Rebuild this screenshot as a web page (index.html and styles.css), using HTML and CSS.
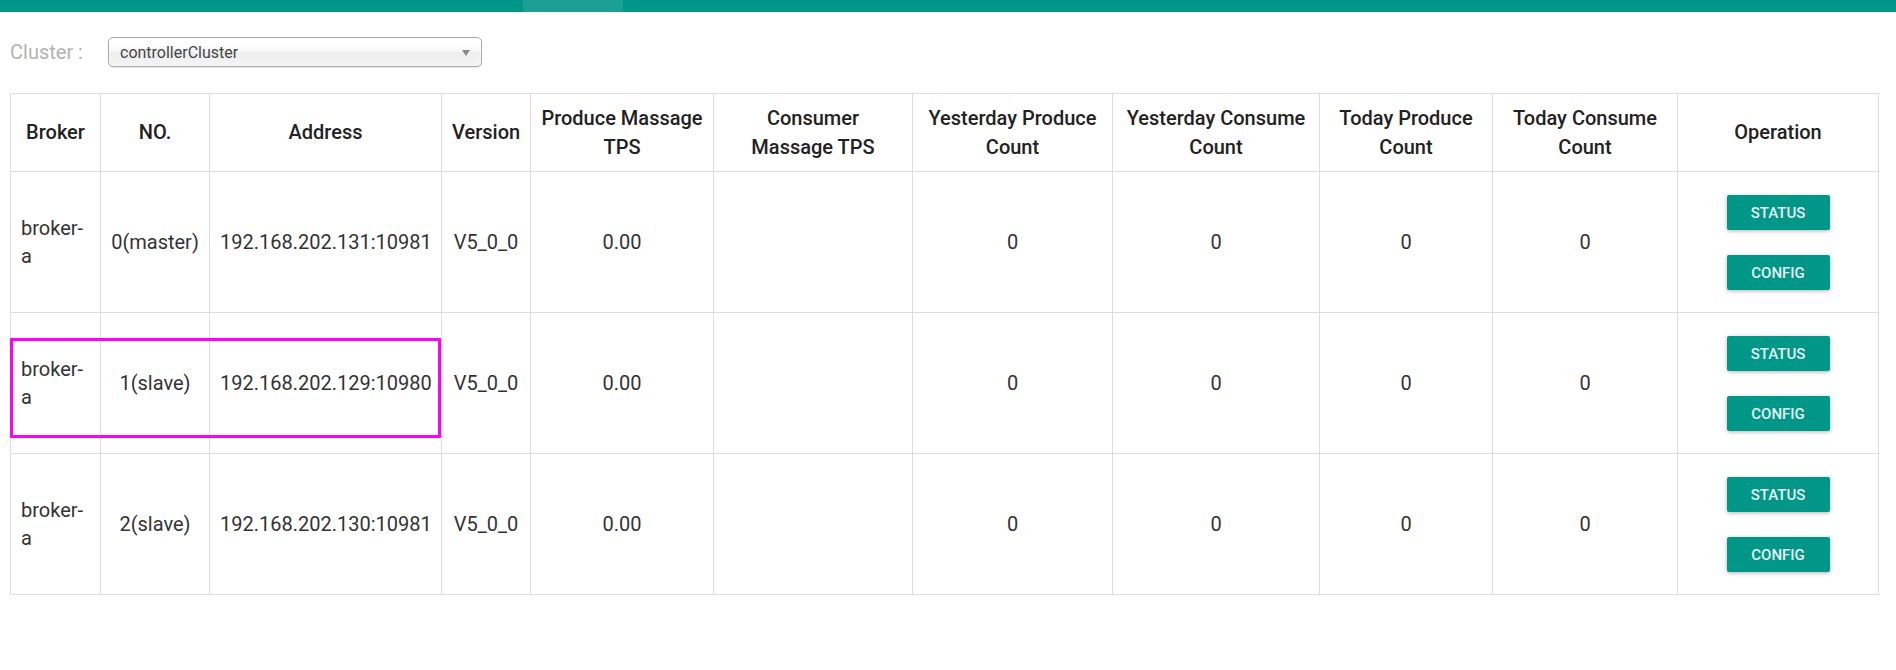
FILE: index.html
```html
<!DOCTYPE html>
<html lang="en">
<head>
  <meta charset="UTF-8">
  <title>RocketMQ Console – Cluster</title>
  <link rel="stylesheet" href="styles.css">
</head>
<body>
  <div class="topbar"><span class="topbar-active"></span></div>

  <div class="page">
    <div class="cluster-row">
      <label class="cluster-label">Cluster :</label>
      <div class="cluster-select">
        <span>controllerCluster</span>
        <span class="select-arrow"></span>
      </div>
    </div>

    <div class="table-wrap">
      <table class="broker-table">
        <colgroup>
          <col style="width:90px"><col style="width:109px"><col style="width:232px"><col style="width:89px">
          <col style="width:183px"><col style="width:199px"><col style="width:200px"><col style="width:207px">
          <col style="width:173px"><col style="width:185px"><col style="width:201px">
        </colgroup>
        <thead>
          <tr>
            <th>Broker</th>
            <th>NO.</th>
            <th>Address</th>
            <th>Version</th>
            <th>Produce Massage TPS</th>
            <th>Consumer Massage TPS</th>
            <th>Yesterday Produce Count</th>
            <th>Yesterday Consume Count</th>
            <th>Today Produce Count</th>
            <th>Today Consume Count</th>
            <th>Operation</th>
          </tr>
        </thead>
        <tbody>
          <tr>
            <td class="broker-name">broker-a</td>
            <td>0(master)</td>
            <td>192.168.202.131:10981</td>
            <td>V5_0_0</td>
            <td>0.00</td>
            <td></td>
            <td>0</td>
            <td>0</td>
            <td>0</td>
            <td>0</td>
            <td><div class="ops"><button class="btn">Status</button><button class="btn">Config</button></div></td>
          </tr>
          <tr>
            <td class="broker-name">broker-a</td>
            <td>1(slave)</td>
            <td>192.168.202.129:10980</td>
            <td>V5_0_0</td>
            <td>0.00</td>
            <td></td>
            <td>0</td>
            <td>0</td>
            <td>0</td>
            <td>0</td>
            <td><div class="ops"><button class="btn">Status</button><button class="btn">Config</button></div></td>
          </tr>
          <tr>
            <td class="broker-name">broker-a</td>
            <td>2(slave)</td>
            <td>192.168.202.130:10981</td>
            <td>V5_0_0</td>
            <td>0.00</td>
            <td></td>
            <td>0</td>
            <td>0</td>
            <td>0</td>
            <td>0</td>
            <td><div class="ops"><button class="btn">Status</button><button class="btn">Config</button></div></td>
          </tr>
        </tbody>
      </table>
      <div class="highlight-box"></div>
    </div>
  </div>
</body>
</html>
```

FILE: styles.css
```css
* {
  box-sizing: border-box;
}
body {
  margin: 0;
  font-family: Roboto, "Liberation Sans", sans-serif;
  background: #ffffff;
  color: #333;
}
.topbar {
  height: 12px;
  background: #009688;
  display: flex;
  padding-left: 523px;
}
.topbar-active {
  width: 100px;
  background: #1ba093;
}
.page {
  padding: 25px 18px 0 10px;
}
.cluster-row {
  display: flex;
  align-items: center;
  height: 30px;
}
.cluster-label {
  width: 98px;
  font-size: 20px;
  color: #b3b3b3;
}
.cluster-select {
  position: relative;
  width: 374px;
  height: 30px;
  padding: 0 11px;
  display: flex;
  align-items: center;
  font-size: 16px;
  color: #444;
  border: 1px solid #aaa;
  border-radius: 5px;
  background: linear-gradient(#fff 20%, #f6f6f6 50%, #eee 52%, #f4f4f4 100%);
  box-shadow: 0 0 3px #fff inset, 0 1px 1px rgba(0, 0, 0, 0.1);
}
.select-arrow {
  position: absolute;
  right: 11px;
  top: 12px;
  border-left: 4px solid transparent;
  border-right: 4px solid transparent;
  border-top: 6px solid #888;
}
.table-wrap {
  position: relative;
  margin-top: 26px;
}
.broker-table {
  width: 100%;
  table-layout: fixed;
  border-collapse: collapse;
  font-size: 20px;
  line-height: 28.5px;
}
.broker-table th,
.broker-table td {
  border: 1px solid #ddd;
  padding: 10px;
  text-align: center;
  vertical-align: middle;
}
.broker-table th {
  font-weight: 500;
  color: #222;
}
.broker-table td.broker-name {
  text-align: left;
}
.ops {
  display: flex;
  flex-direction: column;
  align-items: center;
  gap: 25px;
  padding: 13px 0 12px;
}
.btn {
  width: 103px;
  height: 35px;
  border: none;
  border-radius: 2px;
  background: #009688;
  color: #e3f4f2;
  font-family: Roboto, "Liberation Sans", sans-serif;
  font-size: 15px;
  font-weight: 500;
  text-transform: uppercase;
  box-shadow: 0 1px 4px rgba(0, 0, 0, 0.3);
  cursor: pointer;
}
.highlight-box {
  position: absolute;
  left: 0;
  top: 245px;
  width: 431px;
  height: 100px;
  border: 3px solid #f0f;
}
```
